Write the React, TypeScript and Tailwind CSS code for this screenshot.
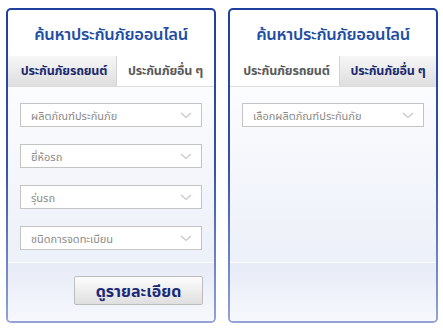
import React from "react";

const Chevron = () => (
  <svg width="12" height="7" viewBox="0 0 12 7" className="shrink-0">
    <path d="M1 1 L6 5.5 L11 1" fill="none" stroke="#c8c8c8" strokeWidth="1.3" />
  </svg>
);

const Select = ({ label }: { label: string }) => (
  <div className="mx-[12px] h-[24px] border border-[#c4c4c4] bg-white flex items-center justify-between pl-[10px] pr-[9px]">
    <span className="text-[11px] text-[#8a8a8a] leading-none">{label}</span>
    <Chevron />
  </div>
);

const Panel = ({ activeFirst }: { activeFirst: boolean }) => {
  const active =
    "bg-gradient-to-b from-[#f7f7f7] to-[#dedede] text-[#1c2a6e]";
  const inactive = "bg-white text-[#5a5a5a]";
  return (
    <div className="w-[210px] h-[315px] rounded-[5px] p-[2px] bg-gradient-to-b from-[#1f3f9c] via-[#3553a8] to-[#95a3d6]">
      <div className="w-full h-full rounded-[3px] bg-white flex flex-col overflow-hidden">
        <div className="h-[46px] flex items-center justify-center pt-[2px]">
          <span className="text-[16.5px] font-semibold text-[#1e4ea2] tracking-[-0.3px]">
            ค้นหาประกันภัยออนไลน์
          </span>
        </div>
        <div className="h-[31px] flex border-b border-[#dcdcdc]">
          <div
            className={`w-[109px] flex items-center justify-center pl-[4px] text-[12.5px] font-bold tracking-[-0.2px] ${
              activeFirst ? active + " border-r border-[#d4d4d4]" : inactive
            }`}
          >
            ประกันภัยรถยนต์
          </div>
          <div
            className={`flex-1 flex items-center justify-center text-[12.5px] font-bold tracking-[-0.2px] ${
              !activeFirst ? active + " border-l border-[#d4d4d4]" : inactive
            }`}
          >
            ประกันภัยอื่น ๆ
          </div>
        </div>
        <div className="h-[175px] bg-gradient-to-b from-[#fbfcfe] to-[#ecf0f8] pt-[16px] flex flex-col gap-[17px]">
          {activeFirst ? (
            <>
              <Select label="ผลิตภัณฑ์ประกันภัย" />
              <Select label="ยี่ห้อรถ" />
              <Select label="รุ่นรถ" />
              <Select label="ชนิดการจดทะเบียน" />
            </>
          ) : (
            <Select label="เลือกผลิตภัณฑ์ประกันภัย" />
          )}
        </div>
        <div className="flex-1 border-t border-white bg-gradient-to-b from-[#e7ebf6] to-[#f6f8fd] flex justify-end pr-[11px] pt-[13px]">
          {activeFirst && (
            <div className="w-[129px] h-[29px] rounded-[2px] border border-[#bdbdbd] bg-gradient-to-b from-[#fdfdfd] to-[#dfdfdf] flex items-center justify-center text-[16px] font-bold text-[#1b2a78]">
              ดูรายละเอียด
            </div>
          )}
        </div>
      </div>
    </div>
  );
};

export default function App() {
  return (
    <div
      className="w-[443px] h-[330px] bg-white flex gap-[12px] pl-[6px] pt-[8px]"
      style={{ fontFamily: '"Noto Sans", "Noto Sans Thai", Tahoma, sans-serif' }}
    >
      <Panel activeFirst={true} />
      <Panel activeFirst={false} />
    </div>
  );
}
